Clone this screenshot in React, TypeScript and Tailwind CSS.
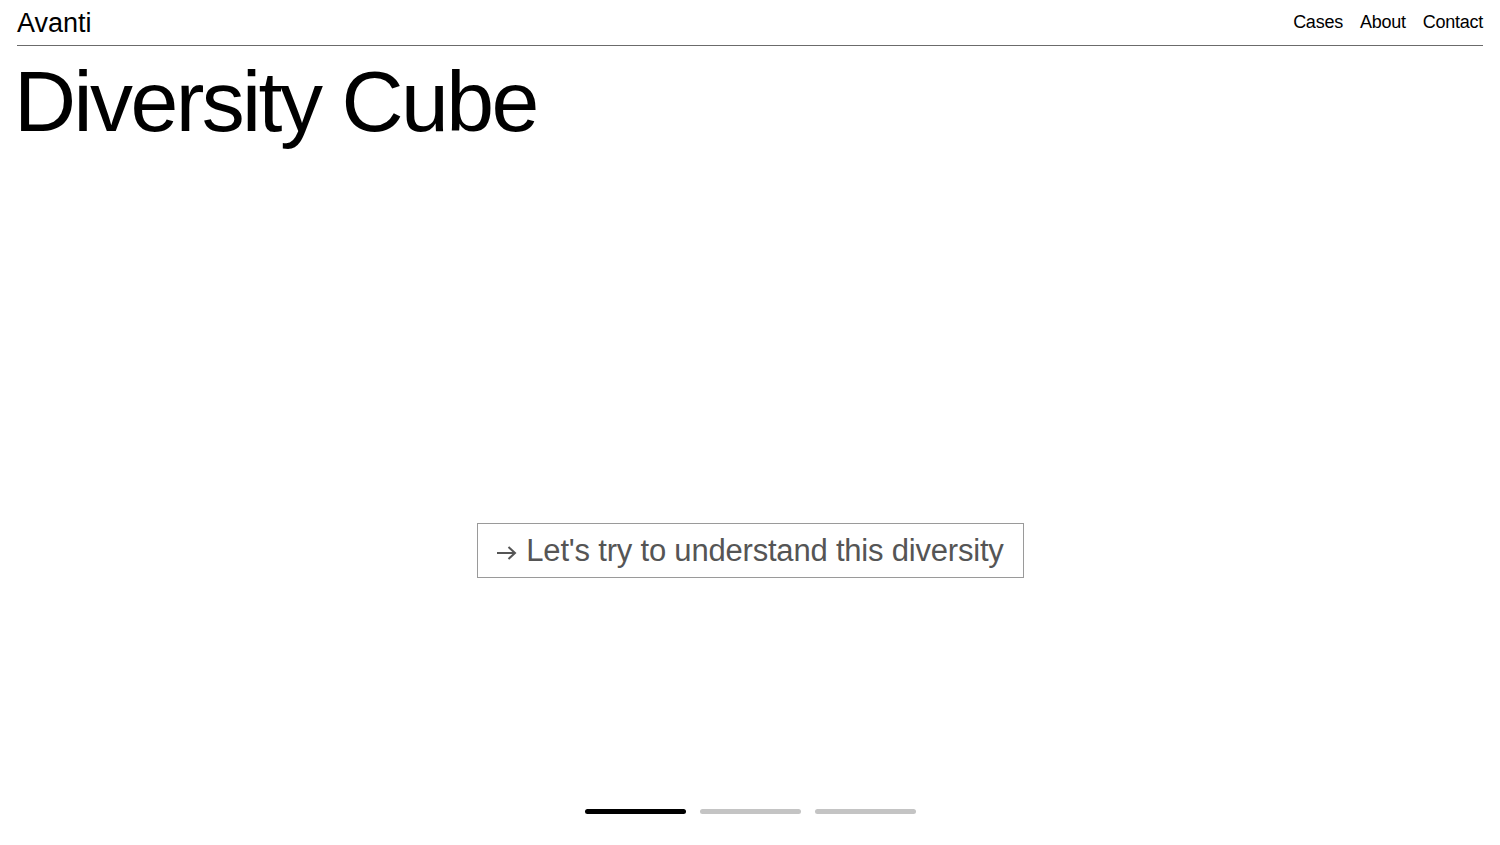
export default function App() {
  return (
    <div
      className="min-h-screen w-full bg-white flex flex-col text-black"
      style={{ fontFamily: '"Liberation Sans", Arial, sans-serif' }}
    >
      <header className="mx-[17px] flex items-end justify-between border-b border-[#6b6b6b] h-[46px] pb-[8px]">
        <a className="text-[27px] leading-none tracking-[0px]">Avanti</a>
        <nav className="flex gap-[17px] text-[18px] leading-none tracking-[-0.25px] pb-[6px]">
          <a>Cases</a>
          <a>About</a>
          <a>Contact</a>
        </nav>
      </header>

      <h1 className="px-[14px] mt-[12px] text-[86px] leading-none tracking-[-2.6px]">Diversity Cube</h1>

      <main className="flex-1 flex flex-col items-center">
        <button className="mt-[379px] h-[55px] w-[547px] pt-[2px] border border-[#9a9a9a] flex items-center justify-center gap-[9px] text-[31px] text-[#555] tracking-[-0.2px]">
          <svg width="21" height="14" viewBox="0 0 21 14" fill="none" stroke="#555" strokeWidth="2" className="mt-[2px]">
            <path d="M1 7h18M12.5 1l6.5 6-6.5 6" />
          </svg>
          <span>Let's try to understand this diversity</span>
        </button>

        <div className="mt-auto mb-[31px] flex gap-[14px]">
          <span className="block w-[101px] h-[5px] rounded-full bg-black" />
          <span className="block w-[101px] h-[5px] rounded-full bg-[#c4c4c4]" />
          <span className="block w-[101px] h-[5px] rounded-full bg-[#c4c4c4]" />
        </div>
      </main>
    </div>
  )
}
